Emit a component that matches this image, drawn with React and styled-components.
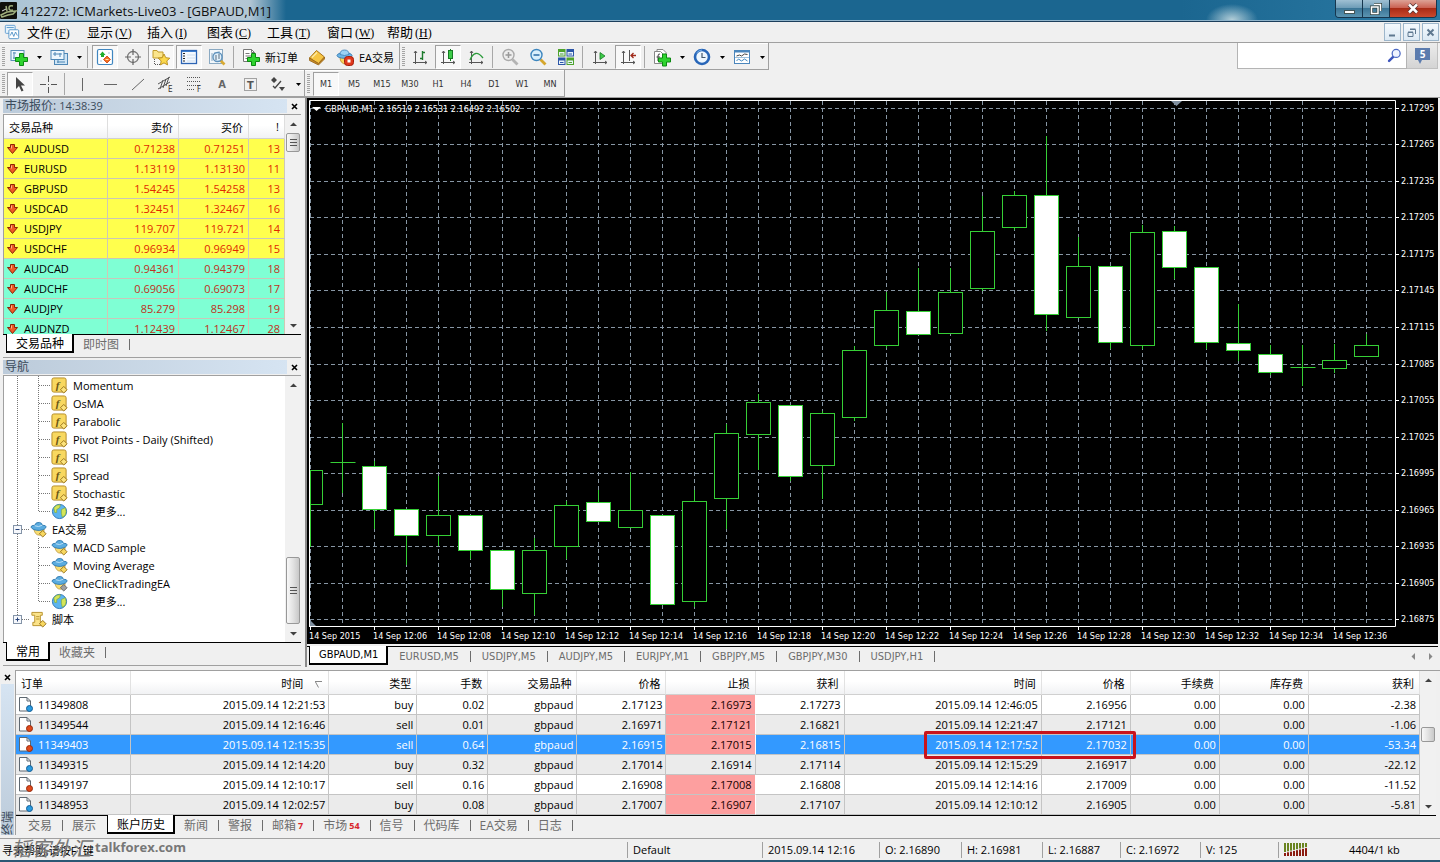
import React, { useState } from 'react';
import styled, { createGlobalStyle, css } from 'styled-components';

const GlobalStyle = createGlobalStyle`
  :root {
    --face: #f0f0f0;
    --line: #a0a0a0;
    --font-ui: "Open Sans", "Noto Sans CJK SC", sans-serif;
    --font-small: "DejaVu Sans Condensed", "DejaVu Sans", "Noto Sans CJK SC", sans-serif;
  }

  * {
    box-sizing: border-box;
  }

  body {
    margin: 0;
    background: var(--face);
    color: #000;
    font-family: var(--font-ui);
    font-size: 11px;
  }

  button, input {
    font: inherit;
    color: inherit;
    margin: 0;
    padding: 0;
    border: 0;
    background: none;
  }

  svg {
    display: block;
    flex: none;
    overflow: visible;
  }
`;

const Window = styled.div`
  display: flex;
  flex-direction: column;
  border-bottom: 2px solid #2b5874;
`;

/* title bar */

const TitleBar = styled.header`
  display: flex;
  align-items: center;
  height: 22px;
  padding-right: 3px;
  border-bottom: 1px solid #1c3f5c;
  box-shadow: inset 0 -1px 0 #8fb4cb;
  background:
    radial-gradient(ellipse 26px 16px at 1232px 20px, #b4cfd9, transparent),
    linear-gradient(90deg, #a9c3d4 0, #c2d0dc 140px, #b2c6d4 250px, #1b6690 286px, #1b6690 82%, #2b7aa4);
`;

const TitleText = styled.h1`
  flex: 1;
  margin: 0 0 0 4px;
  font-size: 13px;
  line-height: 20px;
  font-weight: 400;
  color: #111;
`;

const CaptionGroup = styled.div`
  display: flex;
  align-self: flex-start;
  height: 18px;
  border: 1px solid #16364e;
  border-top: 0;
  border-radius: 0 0 4px 4px;
  overflow: hidden;
`;

const CaptionButton = styled.button`
  display: flex;
  align-items: center;
  justify-content: center;
  width: ${(p) => (p.$close ? 46 : 27)}px;
  border-right: ${(p) => (p.$close ? '0' : '1px solid #16364e')};
  background: ${(p) =>
    p.$close
      ? 'linear-gradient(#dda296, #cb6253 45%, #a92b16 50%, #c9492e)'
      : 'linear-gradient(#9fc0d3, #6f9db8 45%, #3c7697 50%, #5b94b1)'};
`;

/* menu */

const MenuBar = styled.nav`
  display: flex;
  align-items: center;
  height: 21px;
  padding: 0 1px 0 4px;
  border-bottom: 1px solid var(--line);
`;

const MenuItems = styled.div`
  display: flex;
  flex: 1;
  margin-left: 7px;
`;

const MenuButton = styled.button`
  width: 60px;
  text-align: left;
  font-size: 13px;
  line-height: 18px;
  white-space: nowrap;

  span {
    margin-left: 2px;
    font-family: "Liberation Serif", serif;
    font-size: 12px;
  }
`;

const ChildButtons = styled.div`
  display: flex;
  gap: 2px;
`;

const ChildButton = styled.button`
  display: flex;
  align-items: center;
  justify-content: center;
  width: 17px;
  height: 18px;
  border: 1px solid #9db6cb;
  background: linear-gradient(#f4f9fd, #dce9f4);
`;

/* toolbars */

const ToolRow = styled.div`
  display: flex;
  align-items: stretch;
  height: 27px;
`;

const ToolBar = styled.div`
  display: flex;
  align-items: center;
  padding-top: 2px;
  padding-left: 2px;
  border-right: 1px solid var(--line);
  border-bottom: 1px solid var(--line);
  box-shadow: inset 0 1px 0 #fff;
`;

const Grip = styled.div`
  width: 3px;
  height: 20px;
  margin-right: ${(p) => p.$gap || 0}px;
  background: repeating-linear-gradient(#a4a4a4 0 1px, #f0f0f0 1px 2px);
`;

const Tool = styled.button`
  display: flex;
  align-items: center;
  justify-content: center;
  width: 26px;
  height: 24px;
  margin: 0 1px;
  border: 1px solid transparent;
  font-family: var(--font-small);
  font-size: 9px;
  color: #333;
  ${(p) =>
    p.$on &&
    css`
      border-color: #a0a0a0 #fff #fff #a0a0a0;
      background: #f8f8f8;
    `}
`;

const TextTool = styled.button`
  display: flex;
  align-items: center;
  gap: 5px;
  height: 24px;
  padding: 0 5px;
  white-space: nowrap;
`;

const CaretButton = styled.button`
  display: flex;
  align-items: center;
  justify-content: center;
  width: 12px;
  height: 24px;
`;

const Divider = styled.div`
  width: 1px;
  height: 22px;
  margin: 0 3px 0 2px;
  background: #a8a8a8;
`;

const SearchBox = styled.label`
  display: flex;
  align-items: center;
  width: 170px;
  height: 26px;
  margin-left: auto;
  padding-right: 4px;
  border: 1px solid #b4b4b4;
  border-top: 0;
  background: #fff;

  input {
    flex: 1;
    min-width: 0;
    height: 22px;
    padding: 0 4px;
    outline: 0;
  }
`;

const ChatButton = styled.button`
  display: flex;
  align-items: center;
  justify-content: center;
  width: 31px;
  height: 26px;
  margin-right: 2px;
  border-right: 1px solid #c0c0c0;
  border-bottom: 1px solid #c0c0c0;
  background: linear-gradient(#ececec, #d4d4d4);
`;

/* work area */

const WorkArea = styled.main`
  display: flex;
`;

const SideColumn = styled.aside`
  display: flex;
  flex-direction: column;
  width: 307px;
  flex: none;
  padding: 0 4px 0 3px;
  border-top: 1px solid var(--line);
  border-right: 2px solid #8c8c8c;
`;

const Panel = styled.section`
  display: flex;
  flex-direction: column;
  padding-bottom: 3px;
  margin-bottom: 1px;
  border-bottom: 1px solid var(--line);
`;

const PanelTitle = styled.div`
  display: flex;
  align-items: center;
  height: 14px;
  margin: 1px 0;

  h2 {
    flex: 1;
    margin: 0;
    padding-left: 2px;
    font-size: 12px;
    line-height: 14px;
    font-weight: 400;
    color: #3b4b5b;
    background: linear-gradient(90deg, #bccbda, #d6e4f2);
  }

  span {
    font-size: 11px;
  }
`;

const CloseButton = styled.button`
  display: flex;
  align-items: center;
  justify-content: center;
  width: 14px;
  height: 14px;
`;

const PanelBody = styled.div`
  display: flex;
  height: ${(p) => p.$height}px;
  overflow: hidden;
  border-top: 1px solid var(--line);
  border-left: 1px solid var(--line);
  background: #fff;
`;

const ScrollTrack = styled.div`
  display: flex;
  flex-direction: column;
  align-items: center;
  width: 16px;
  flex: none;
  background: #f1f1f1;
`;

const ScrollArrow = styled.button`
  display: flex;
  align-items: center;
  justify-content: center;
  width: 16px;
  height: 18px;
  flex: none;
`;

const ScrollSpace = styled.div`
  flex: ${(p) => p.$grow} 0 0;
`;

const ScrollThumb = styled.div`
  display: flex;
  align-items: center;
  justify-content: center;
  width: 14px;
  height: ${(p) => p.$size}px;
  flex: none;
  border: 1px solid #989898;
  border-radius: 2px;
  background: linear-gradient(90deg, #f8f8f8, #e2e2e2 50%, #c8c8c8);
`;

const Tab = styled.button`
  display: flex;
  align-items: center;
  height: 18px;
  padding-left: 9px;
  color: #6d6d6d;
  white-space: nowrap;

  &::after {
    content: '';
    width: 1px;
    height: 11px;
    margin-left: 10px;
    background: ${(p) => (p.$bare ? 'transparent' : '#6d6d6d')};
  }

  sub {
    margin-left: 2px;
    font-family: "Open Sans", sans-serif;
    font-size: 9px;
    font-weight: 700;
    color: #d8262c;
  }

  ${(p) =>
    p.$active &&
    css`
      height: 19px;
      margin-top: -1px;
      padding: 0 8px 0 9px;
      color: #000;
      background: #fff;
      border: solid #000;
      border-width: 0 2px 2px 1px;

      &::after {
        display: none;
      }
    `}
`;

const TabStrip = styled.div`
  display: flex;
  align-items: flex-start;
  height: 20px;
  padding-left: ${(p) => (p.$latin ? 2 : 3)}px;
  border-top: 1px solid #000;
  font-family: ${(p) => (p.$latin ? 'var(--font-small)' : 'inherit')};
  font-size: ${(p) => (p.$latin ? 11 : 12)}px;

  ${(p) =>
    p.$latin &&
    css`
      ${Tab} + ${Tab} {
        padding-left: 11px;
      }

      ${Tab}::after {
        margin-left: 11px;
      }
    `}
`;

/* tables */

const QuoteTable = styled.table`
  flex: 1;
  align-self: flex-start;
  table-layout: fixed;
  border-collapse: separate;
  border-spacing: 0;

  th {
    height: 24px;
    padding: 0 5px;
    font-weight: 400;
    text-align: right;
    border-right: 1px solid #dedede;
    border-bottom: 1px solid #d0d0d0;
    background: linear-gradient(#fff 45%, #f1f2f4);
  }

  th:first-child {
    text-align: left;
  }
`;

const QuoteRow = styled.tr`
  background: ${(p) => (p.$tone === 'major' ? '#ffff4d' : '#7fffd4')};

  td {
    height: 20px;
    padding: 0 3px;
    text-align: right;
    line-height: 16px;
    color: ${(p) => (p.$tone === 'major' ? '#e02800' : '#c03020')};
    border-right: 1px solid #cfc9b4;
    border-bottom: 1px solid #c9c7b8;
  }

  td:first-child {
    color: #000;
  }

  td:last-child {
    padding-right: 4px;
  }
`;

const CellLabel = styled.div`
  display: flex;
  align-items: center;
  gap: ${(p) => p.$gap || 4}px;
`;

const Tree = styled.ul`
  flex: 1;
  margin: 0;
  padding: 0 0 0 5px;
  list-style: none;
`;

const TreeItem = styled.li`
  display: flex;
  align-items: center;
  height: 18px;
  white-space: nowrap;

  span {
    margin-left: 5px;
  }
`;

/* chart */

const ChartColumn = styled.div`
  flex: 1;
  min-width: 0;
  padding-right: 2px;
  border-top: 1px solid var(--line);
`;

const ChartSvg = styled.svg`
  width: 100%;
  height: auto;
  background: #000;
  font-family: var(--font-small);
  font-size: 9px;
  margin-bottom: 2px;
`;

const TabArrows = styled.div`
  display: flex;
  gap: 10px;
  margin: 6px 4px 0 auto;
`;

/* terminal */

const Terminal = styled.section`
  display: flex;
  margin-top: 3px;
  padding-bottom: 3px;
  border-bottom: 1px solid var(--line);
`;

const TerminalSide = styled.div`
  display: flex;
  flex-direction: column;
  align-items: center;
  width: 15px;
  flex: none;

  h2 {
    flex: 1;
    width: 13px;
    margin: 0;
    font-size: 12px;
    line-height: 13px;
    font-weight: 400;
    color: #3b4b5b;
    writing-mode: vertical-rl;
    text-orientation: sideways;
    transform: rotate(180deg);
    background: linear-gradient(#bccbda, #d6e4f2);
  }
`;

const TerminalMain = styled.div`
  flex: 1;
  min-width: 0;
  padding-right: 4px;
  border-top: 1px solid var(--line);
  border-left: 1px solid var(--line);
`;

const TerminalBody = styled.div`
  display: flex;
  background: #fff;
`;

const OrderTable = styled.table`
  flex: 1;
  min-width: 0;
  table-layout: fixed;
  border-collapse: separate;
  border-spacing: 0;

  th {
    height: 24px;
    padding: 0 5px;
    font-weight: 400;
    text-align: right;
    white-space: nowrap;
    border-right: 1px solid #e2e2e2;
    border-bottom: 1px solid #d0d0d0;
    background: linear-gradient(#fff 45%, #f1f2f4);
  }

  th:first-child {
    text-align: left;
  }

  th svg {
    display: inline-block;
    margin: 0 1px 0 12px;
  }
`;

const OrderRow = styled.tr`
  background: ${(p) => (p.$selected ? '#3399ff' : p.$odd ? '#ebebeb' : '#fff')};
  color: ${(p) => (p.$selected ? '#fff' : '#000')};
`;

const OrderCell = styled.td`
  position: relative;
  height: 20px;
  padding: 0 3px;
  text-align: right;
  line-height: 16px;
  white-space: nowrap;
  border-right: 1px solid #c4c4c4;
  border-bottom: 1px solid #c4c4c4;
  ${(p) =>
    p.$stop &&
    css`
      color: #200000;
      background: #fd9f9f;
      border-right-color: #fff;
    `}
`;

const Marker = styled.div`
  position: absolute;
  z-index: 1;
  top: -4px;
  right: -95px;
  width: 212px;
  height: 28px;
  border: 3px solid #c9141c;
  border-radius: 2px;
  pointer-events: none;
`;

/* status bar */

const StatusBar = styled.footer`
  position: relative;
  display: flex;
  align-items: center;
  height: 21px;
`;

const StatusHelp = styled.div`
  flex: 1;
  padding-left: 2px;
`;

const StatusCell = styled.div`
  display: flex;
  align-items: center;
  width: ${(p) => p.$width}px;
  height: 16px;
  padding-left: 5px;
  border-left: 1px solid #a0a0a0;
  white-space: nowrap;

  svg {
    margin-right: 41px;
  }
`;

const Watermark = styled.div`
  position: absolute;
  left: 11px;
  top: -2px;
  display: flex;
  align-items: center;
  gap: 4px;
  height: 20px;
  font-family: "Open Sans", sans-serif;
  font-size: 13px;
  font-weight: 700;
  color: #777;

  i {
    font-family: "Noto Sans CJK SC", sans-serif;
    font-size: 20px;
    font-weight: 400;
  }
`;

/* icons */

const Caret = () => (
  <svg width="5" height="3" viewBox="0 0 5 3"><path d="M0 0h5L2.5 3z" fill="#000" /></svg>
);

const CloseMark = () => (
  <svg width="7" height="7" viewBox="0 0 7 7"><path d="M1 1l5 5M6 1L1 6" stroke="#000" strokeWidth="1.6" /></svg>
);

const Arrow = ({ d, fill = '#404040' }) => (
  <svg width="7" height="7" viewBox="0 0 7 7"><path d={d} fill={fill} /></svg>
);
const UP = 'M0 5L3.5 1.5 7 5z';
const DOWN = 'M0 2L3.5 5.5 7 2z';
const LEFT = 'M5 0v7L1.5 3.5z';
const RIGHT = 'M2 0v7l3.5-3.5z';

const Icon = ({ size = 18, children }) => (
  <svg width={size} height={size} viewBox="0 0 18 18" fill="none">{children}</svg>
);

const Plus = ({ x = 6, y = 6 }) => (
  <path
    transform={`translate(${x} ${y})`}
    d="M4 .5h4v4h4v4H8v4H4v-4H0v-4h4z"
    fill="#2fd32f"
    stroke="#0c8a12"
  />
);

const Axes = () => <path d="M4.5 3v13M2 14.5h14M3 5l1.5-2L6 5M14 13l2 1.5-2 1.5" stroke="#555" />;

const AppLogo = () => (
  <svg width="17" height="17" viewBox="0 0 17 17">
    <rect width="17" height="17" rx="1" fill="#10100c" />
    <path d="M1 13l6-3 9-1-3 3-5 1-6 2zM6 4l1 5M13 4q-4-1-4 2t4 2" stroke="#9fae7c" strokeWidth="1.5" fill="none" />
    <path d="M2 9l4-2" stroke="#ddd" />
  </svg>
);

const ChildLogo = () => (
  <Icon size={16}>
    <rect x="1.5" y="1.5" width="11" height="9" rx="1" fill="#e8f4fc" stroke="#5b9bd0" />
    <rect x="5.5" y="6.5" width="11" height="10" rx="1" fill="#fff" stroke="#4d8fc6" />
    <path d="M3 4h8M7 13l2-4 2 5 2-5 2 4" stroke="#4d8fc6" />
  </Icon>
);

const NewChartIcon = () => (
  <Icon>
    <rect x="1" y="2.5" width="13" height="10" fill="#eef7fd" stroke="#5d8fb8" />
    <path d="M4 4v7M3 5h3M3 10h9" stroke="#5d8fb8" />
    <Plus x={5.5} y={5} />
  </Icon>
);

const ProfilesIcon = () => (
  <Icon>
    <rect x="4.5" y="5.5" width="13" height="11" fill="#cfe5f5" stroke="#4f87b5" />
    <rect x="1" y="2.5" width="13" height="9" fill="#eef7fd" stroke="#4f87b5" />
    <path d="M3 6h9M5 4v4M10 5v4M7 14h8M8 12v3" stroke="#4f87b5" />
  </Icon>
);

const MarketWatchIcon = () => (
  <Icon>
    <rect x="1.5" y="1.5" width="15" height="15" rx="1.5" fill="#fff" stroke="#3f86c0" strokeWidth="1.2" />
    <path d="M3.5 7L6.5 3.5 9.500 7H8v2H5V7z" fill="#1fae2b" />
    <path d="M7.5 11.500L11 8l3.500 3.500L11 15z" fill="#f4711f" stroke="#c63c11" strokeWidth=".8" />
    <path d="M9.500 11.500h3" stroke="#ffe0b0" />
    <path d="M4 13h2M12 5h2" stroke="#a8c8e0" />
  </Icon>
);

const TargetIcon = () => (
  <Icon>
    <circle cx="9" cy="9" r="5.5" stroke="#777" strokeWidth="1.3" />
    <path d="M9 1v6M9 11v6M1 9h6M11 9h6" stroke="#666" strokeWidth="1.2" />
  </Icon>
);

const star = 'M12 6l1.8 3.7 4 .5-3 2.7.8 4-3.6-2-3.6 2 .8-4-3-2.7 4-.5z';
const NavigatorIcon = () => (
  <Icon>
    <path d="M1 2.5h4l1 1.5h5v6H1z" fill="#fbe58c" stroke="#c09a2c" />
    <path d="M2.5 11v5.5H8" stroke="#555" strokeDasharray="1 1" />
    <path d={star} fill="#fbd84c" stroke="#b58a1a" strokeWidth=".9" />
  </Icon>
);

const TerminalIcon = () => (
  <Icon>
    <rect x="1.5" y="2.5" width="15" height="13" fill="#f4f9ff" stroke="#2c64b4" strokeWidth="1.3" />
    <path d="M2 3.5h14" stroke="#3d7fd0" />
    <path d="M4 5v10" stroke="#222" strokeWidth="2" strokeDasharray="1 1.5" />
    <path d="M7 7h8M7 10h8M7 13h8" stroke="#cfdff0" />
  </Icon>
);

const TesterIcon = () => (
  <Icon>
    <rect x="1.5" y="1.5" width="13" height="14" fill="#f2f7fb" stroke="#8aa9c2" />
    <path d="M4 13V5m3 8V4m4 4V3" stroke="#8aa9c2" />
    <path d="M12.5 12.5l4 4" stroke="#d8aa34" strokeWidth="2.6" />
    <circle cx="9.5" cy="9" r="4.5" fill="#dff0fb" fillOpacity=".85" stroke="#5d90bb" strokeWidth="1.3" />
    <path d="M8 7v5M11 6v5" stroke="#5d6f80" />
  </Icon>
);

const NewOrderIcon = () => (
  <Icon>
    <path d="M1.5 1.5h8l3 3v9h-11z" fill="#fff" stroke="#777" />
    <path d="M9.5 1.5v3h3M3.5 5.5h4M3.5 8h6M3.5 10.5h3" stroke="#777" />
    <Plus x={5.5} y={5} />
  </Icon>
);

const GoldIcon = () => (
  <Icon>
    <path d="M1.5 10L8.5 2.5l8 6.5-6 6.5z" fill="#f6c544" stroke="#a9741a" />
    <path d="M1.5 10v2.5l9 4.5 6-6V9l-6 6.5z" fill="#c98a1f" stroke="#94631a" strokeWidth=".8" />
    <path d="M4 9.5l5-5" stroke="#fdeaa6" strokeWidth="1.5" />
  </Icon>
);

const ExpertIcon = () => (
  <Icon>
    <path d="M4 9q0 7 6 7t5-7z" fill="#f8d55c" stroke="#b98a22" strokeWidth=".8" />
    <ellipse cx="8.5" cy="7.5" rx="7.5" ry="2.8" fill="#6db6e6" stroke="#3c7fb6" />
    <path d="M4 6.5Q4 2 8.5 2T13 6.5q-4.5 2-9 0z" fill="#9bd2f4" stroke="#3c7fb6" strokeWidth=".8" />
    <rect x="8.5" y="8.5" width="9" height="9" rx="3" fill="#e0381c" stroke="#a41e0b" />
    <rect x="11.5" y="11.5" width="3" height="3" fill="#fff" />
  </Icon>
);

const BarsIcon = () => (
  <Icon><Axes /><path d="M11.5 3v9M9 10.5h2M12 4.5h2" stroke="#1c7a2c" strokeWidth="1.4" /></Icon>
);

const CandlesIcon = () => (
  <Icon><Axes /><path d="M11.5 1v12" stroke="#157a22" /><rect x="9.5" y="2.5" width="4" height="8" fill="#3ccb48" stroke="#157a22" /></Icon>
);

const LineIcon = () => (
  <Icon><Axes /><path d="M3 12q5-12 13-2" stroke="#2a9b3a" strokeWidth="1.3" /></Icon>
);

const ZoomIcon = ({ plus, on }) => (
  <Icon>
    <path d="M11.5 11.5l5 5" stroke={on ? '#d5a62c' : '#b4b4b4'} strokeWidth="2.8" />
    <circle cx="7.5" cy="7" r="5.5" fill={on ? '#d8effc' : '#ededed'} stroke={on ? '#3d86bf' : '#aaa'} strokeWidth="1.4" />
    <path d={plus ? 'M4.5 7h6M7.5 4v6' : 'M4.5 7h6'} stroke={on ? '#2a6ba6' : '#999'} strokeWidth="1.5" />
  </Icon>
);

const TileIcon = () => (
  <Icon>
    {[[1, 1, '#4fa32c'], [9.5, 1, '#2c56a8'], [1, 9.5, '#2c56a8'], [9.5, 9.5, '#4fa32c']].map(([x, y, c]) => (
      <g key={`${x}-${y}`}>
        <rect x={x} y={y} width="7.5" height="7.5" fill={c} />
        <path d={`M${x + 1} ${y + 3}h5.5v3.5h-5.5z`} fill="#e8f3fb" />
        <path d={`M${x + 2} ${y + 5}h3.5`} stroke={c} />
      </g>
    ))}
  </Icon>
);

const ScrollIcon = () => (
  <Icon><Axes /><path d="M9 4.5l5 3.5-5 3.5z" fill="#3ccb48" stroke="#157a22" strokeWidth=".8" /></Icon>
);

const ShiftIcon = () => (
  <Icon><Axes /><path d="M10.5 2v11" stroke="#555" /><path d="M17 7.5h-5M14.5 5L12 7.500l2.500 2.500" stroke="#a02a1a" strokeWidth="1.3" /></Icon>
);

const IndicatorsIcon = () => (
  <Icon>
    <path d="M4 1.500h6l3 3v9H4z" fill="#fff" stroke="#888" />
    <path d="M1.500 3.500h6l3 3v9h-9z" fill="#fff" stroke="#888" />
    <path d="M7 6q-2-.5-2 2v5M3.500 9H7" stroke="#444" />
    <Plus x={5.5} y={5.5} />
  </Icon>
);

const ClockIcon = () => (
  <Icon>
    <circle cx="9" cy="9" r="7" fill="#eef7fe" stroke="#2866b8" strokeWidth="2.6" />
    <path d="M9 5v4.5h3.5" stroke="#44586c" strokeWidth="1.2" />
    <path d="M3.5 5Q6 2 9 2" stroke="#79b3ea" />
  </Icon>
);

const TemplateIcon = () => (
  <Icon>
    <rect x="1.5" y="2.5" width="15" height="13" fill="#fff" stroke="#4b86bc" />
    <path d="M2 3.5h14" stroke="#4b86bc" strokeWidth="2" />
    <path d="M3.5 8l3-1 2 1 3-2 3 .5" stroke="#444" />
    <path d="M3.5 13l2-2 3 2 3-2 3 2" stroke="#3d86bf" />
    <path d="M2 9.5h14" stroke="#9fc2dd" />
  </Icon>
);

const SearchIcon = () => (
  <Icon size={15}>
    <path d="M8 10l-5.5 5.5" stroke="#3d55bd" strokeWidth="3" strokeLinecap="round" />
    <circle cx="11" cy="6.5" r="4.8" fill="#eef3ff" stroke="#4d6ac4" strokeWidth="1.5" />
  </Icon>
);

const ChatIcon = () => (
  <svg width="17" height="16" viewBox="0 0 17 16">
    <path d="M1 0h15v12H8l-2 4-2-4H1z" fill="#5c7cae" />
    <text x="8.5" y="10" textAnchor="middle" fontSize="10" fontWeight="700" fill="#fff">5</text>
  </svg>
);

const CursorIcon = () => (
  <Icon><path d="M5 2v12l3-3 2.5 5.5 2-1L10 10.5h4z" fill="#444" /></Icon>
);
const CrossIcon = () => (
  <Icon><path d="M9.5 1v6M9.5 12v6M1 9.5h6M12 9.5h6M9 9.5h1" stroke="#555" /></Icon>
);
const LineTool = ({ d }) => <Icon><path d={d} stroke="#666" /></Icon>;

const ChannelIcon = () => (
  <Icon>
    <path d="M1 9L13 2M1 14L13 7M3 14l3-9M6 13l3-9M9 11l3-9" stroke="#555" />
    <text x="11" y="17" fontSize="8" fill="#333">E</text>
  </Icon>
);
const FiboIcon = () => (
  <Icon>
    <path d="M2 2.5h14M2 6.5h14M2 10.5h14M2 14.5h8" stroke="#555" strokeDasharray="1 1" />
    <text x="12" y="17" fontSize="8" fill="#333">F</text>
  </Icon>
);
const TextIcon = () => (
  <Icon><text x="9" y="13" textAnchor="middle" fontSize="11" fontWeight="700" fill="#666">A</text></Icon>
);
const LabelIcon = () => (
  <Icon>
    <rect x="3.5" y="3.5" width="12" height="12" stroke="#555" strokeDasharray="1 1" />
    <text x="9.5" y="14" textAnchor="middle" fontSize="11" fontWeight="700" fill="#555">T</text>
  </Icon>
);
const ShapesIcon = () => (
  <Icon>
    <path d="M5 2l3 3-3 3-3-3zM10 12h6l-3 4z" fill="#444" />
    <path d="M4 11l2 2 6-7" stroke="#444" strokeWidth="1.3" />
  </Icon>
);

const DownArrowIcon = () => (
  <svg width="11" height="10" viewBox="0 0 11 10">
    <path d="M3.5.5h4v3h3L5.500 9.500l-5-6h3z" fill="#ee5a24" stroke="#8c2408" />
    <path d="M4.5 1.5v3" stroke="#ffb48a" />
  </svg>
);

const FunctionIcon = () => (
  <Icon size={17}>
    <rect x="1" y="1" width="15" height="15" rx="2" fill="#f8d860" stroke="#b28a26" />
    <text x="5" y="13" fontFamily="Liberation Serif, serif" fontStyle="italic" fontWeight="700" fontSize="12" fill="#6b5615">f</text>
    <path d="M13.5 10l3.5 3.5-3.5 3.5-3.5-3.5z" fill="#fce37c" stroke="#97721a" />
  </Icon>
);

const GlobeIcon = () => (
  <Icon size={17}>
    <circle cx="9" cy="9" r="7.5" fill="#5db4ee" stroke="#2c76b8" />
    <path d="M3 5q3-4 7-3l-1 3-3 2v3L4 10zM11 7l4-2q2 4 0 8l-3 2-1-4z" fill="#d5e55a" stroke="#7ba52d" strokeWidth=".6" />
  </Icon>
);

const HatIcon = ({ gray }) => (
  <Icon size={17}>
    <path d="M4 8q1 7 6 7t5-7z" fill="#f8dc72" stroke="#b8922c" strokeWidth=".8" />
    <path d="M1 6.5q0-2 4-2Q6 1 10 1.5q3 .5 3 3 4 0 4 1.5 0 3-7 4Q3 10 1 6.5z" fill="#5aace0" stroke="#2d76ab" strokeWidth=".9" />
    <path d="M5 5q4 2 8-.5" stroke="#bfe2f8" />
    <path d="M13.5 10l3.5 3.5-3.5 3.5-3.5-3.5z" fill={gray ? '#a0a0a0' : '#f8d860'} stroke={gray ? '#666' : '#97721a'} />
  </Icon>
);

const ScriptIcon = () => (
  <Icon size={17}>
    <path d="M2 1.5h11v3h-2V12h3v3.5H3V12h2V4.500H2z" fill="#fbe38a" stroke="#b8922c" />
    <path d="M6.5 6H10M6.5 8.5H10" stroke="#b8922c" />
    <path d="M13.5 10l3.5 3.5-3.5 3.5-3.5-3.5z" fill="#f8d860" stroke="#97721a" />
  </Icon>
);

const OrderIcon = ({ type }) => (
  <svg width="14" height="15" viewBox="0 0 14 15">
    <path d="M.5.5H8L11.500 4v10H.5z" fill="#fff" stroke="#5d6770" />
    <path d="M8 .5V4h3.5" fill="none" stroke="#5d6770" />
    <circle cx="10.5" cy="11.5" r="3" fill={type === 'buy' ? '#2a9be0' : '#e04a1c'} stroke={type === 'buy' ? '#135f98' : '#982a0a'} />
  </svg>
);

const LoadIcon = () => (
  <svg width="24" height="13" viewBox="0 0 24 13">
    {[0, 1, 2, 3, 4, 5, 6, 7].map((i) => (
      <g key={i}>
        <rect x={i * 3} y="0" width="2" height={9 - i * 0.7} fill="#6a8420" />
        <rect x={i * 3} y={10 - i * 0.7} width="2" height={3 + i * 0.7} fill="#8c1c10" />
      </g>
    ))}
  </svg>
);

// trunk lines of the tree: one 21px cell per level
const TreeLine = ({ level, last, toggle }) => (
  <svg width={level === 2 ? 42 : 21} height="18" viewBox={`0 0 ${level === 2 ? 42 : 21} 18`} fill="none">
    <g stroke="#777" strokeDasharray="1 1">
      {(level === 1 || !last) && <path d={toggle === '+' ? 'M8.5 0v9' : 'M8.5 0v18'} />}
      {level === 2 && last && <path d="M8.5 0v18" />}
      {level === 2 && <path d={last ? 'M29.5 0v9.5H41' : 'M29.5 0v18M30 9.5h11'} />}
      {level === 1 && <path d="M9 9.5h12" />}
    </g>
    {toggle && (
      <g>
        <rect x="4.5" y="5.5" width="8" height="8" fill="#f6f8fc" stroke="#8494a8" />
        <path d={toggle === '+' ? 'M6.5 9.5h4M8.5 7.5v4' : 'M6.5 9.5h4'} stroke="#26427a" />
      </g>
    )}
  </svg>
);

/* data */

const menus = [['文件', 'F'], ['显示', 'V'], ['插入', 'I'], ['图表', 'C'], ['工具', 'T'], ['窗口', 'W'], ['帮助', 'H']];
const periods = ['M1', 'M5', 'M15', 'M30', 'H1', 'H4', 'D1', 'W1', 'MN'];

const quotes = [
  ['AUDUSD', '0.71238', '0.71251', 13, 'major'],
  ['EURUSD', '1.13119', '1.13130', 11, 'major'],
  ['GBPUSD', '1.54245', '1.54258', 13, 'major'],
  ['USDCAD', '1.32451', '1.32467', 16, 'major'],
  ['USDJPY', '119.707', '119.721', 14, 'major'],
  ['USDCHF', '0.96934', '0.96949', 15, 'major'],
  ['AUDCAD', '0.94361', '0.94379', 18, 'cross'],
  ['AUDCHF', '0.69056', '0.69073', 17, 'cross'],
  ['AUDJPY', '85.279', '85.298', 19, 'cross'],
  ['AUDNZD', '1.12439', '1.12467', 28, 'cross'],
];

const treeRows = [
  { label: 'Momentum', icon: <FunctionIcon /> },
  { label: 'OsMA', icon: <FunctionIcon /> },
  { label: 'Parabolic', icon: <FunctionIcon /> },
  { label: 'Pivot Points - Daily (Shifted)', icon: <FunctionIcon /> },
  { label: 'RSI', icon: <FunctionIcon /> },
  { label: 'Spread', icon: <FunctionIcon /> },
  { label: 'Stochastic', icon: <FunctionIcon /> },
  { label: '842 更多...', icon: <GlobeIcon />, last: true },
  { label: 'EA交易', icon: <HatIcon />, level: 1, toggle: '-' },
  { label: 'MACD Sample', icon: <HatIcon /> },
  { label: 'Moving Average', icon: <HatIcon /> },
  { label: 'OneClickTradingEA', icon: <HatIcon gray /> },
  { label: '238 更多...', icon: <GlobeIcon />, last: true },
  { label: '脚本', icon: <ScriptIcon />, level: 1, toggle: '+' },
];

const chartTabs = ['GBPAUD,M1', 'EURUSD,M5', 'USDJPY,M5', 'AUDJPY,M5', 'EURJPY,M1', 'GBPJPY,M5', 'GBPJPY,M30', 'USDJPY,H1'];

const prices = [
  ['2.17295', 108], ['2.17265', 144], ['2.17235', 181], ['2.17205', 217], ['2.17175', 254],
  ['2.17145', 290], ['2.17115', 327], ['2.17085', 364], ['2.17055', 400], ['2.17025', 437],
  ['2.16995', 473], ['2.16965', 510], ['2.16935', 546], ['2.16905', 583], ['2.16875', 619],
];

const times = ['2015', '12:06', '12:08', '12:10', '12:12', '12:14', '12:16', '12:18', '12:20',
  '12:22', '12:24', '12:26', '12:28', '12:30', '12:32', '12:34', '12:36'];

// high, top of body, bottom of body, low, filled
const candles = [
  [470, 470, 504, 546, 0],
  [423, 462, 462, 492, 0],
  [461, 466, 509, 528, 1],
  [509, 509, 535, 564, 1],
  [476, 515, 535, 545, 0],
  [515, 515, 550, 558, 1],
  [550, 550, 589, 606, 1],
  [538, 550, 593, 614, 0],
  [501, 505, 546, 558, 0],
  [490, 502, 521, 521, 1],
  [472, 510, 527, 527, 0],
  [515, 515, 604, 604, 1],
  [490, 501, 601, 606, 0],
  [424, 433, 498, 528, 0],
  [394, 402, 434, 469, 0],
  [405, 405, 476, 480, 1],
  [411, 413, 465, 498, 0],
  [346, 350, 417, 420, 0],
  [292, 310, 345, 347, 0],
  [268, 311, 334, 334, 1],
  [268, 292, 333, 333, 0],
  [196, 231, 288, 290, 0],
  [191, 195, 227, 229, 0],
  [136, 195, 314, 330, 1],
  [237, 266, 317, 317, 0],
  [266, 266, 342, 348, 1],
  [225, 232, 345, 348, 0],
  [226, 231, 267, 278, 1],
  [267, 267, 342, 348, 1],
  [304, 343, 350, 360, 1],
  [345, 354, 372, 374, 1],
  [345, 367, 367, 385, 0],
  [344, 360, 368, 372, 0],
  [334, 345, 356, 356, 0],
];

const orderColumns = [
  ['订单', 115], ['时间', 198], ['类型', 88], ['手数', 71], ['交易品种', 89], ['价格', 89], ['止损', 89],
  ['获利', 89], ['时间', 197], ['价格', 89], ['手续费', 89], ['库存费', 89], ['获利', 111],
];

const orders = [
  ['11349808', '2015.09.14 12:21:53', 'buy', '0.02', 'gbpaud', '2.17123', '2.16973', '2.17273', '2015.09.14 12:46:05', '2.16956', '0.00', '0.00', '-2.38'],
  ['11349544', '2015.09.14 12:16:46', 'sell', '0.01', 'gbpaud', '2.16971', '2.17121', '2.16821', '2015.09.14 12:21:47', '2.17121', '0.00', '0.00', '-1.06'],
  ['11349403', '2015.09.14 12:15:35', 'sell', '0.64', 'gbpaud', '2.16915', '2.17015', '2.16815', '2015.09.14 12:17:52', '2.17032', '0.00', '0.00', '-53.34'],
  ['11349315', '2015.09.14 12:14:20', 'buy', '0.32', 'gbpaud', '2.17014', '2.16914', '2.17114', '2015.09.14 12:15:29', '2.16917', '0.00', '0.00', '-22.12'],
  ['11349197', '2015.09.14 12:10:17', 'sell', '0.16', 'gbpaud', '2.16908', '2.17008', '2.16808', '2015.09.14 12:14:16', '2.17009', '0.00', '0.00', '-11.52'],
  ['11348953', '2015.09.14 12:02:57', 'buy', '0.08', 'gbpaud', '2.17007', '2.16907', '2.17107', '2015.09.14 12:10:12', '2.16905', '0.00', '0.00', '-5.81'],
];
const notStopped = '11349315';

const terminalTabs = [['交易'], ['展示'], ['账户历史'], ['新闻'], ['警报'], ['邮箱', '7'], ['市场', '54'], ['信号'], ['代码库'], ['EA交易'], ['日志']];

/* parts */

const DropTool = ({ label, children }) => (
  <>
    <Tool aria-label={label}>{children}</Tool>
    <CaretButton aria-label={`${label} menu`}><Caret /></CaretButton>
  </>
);

const Tabs = ({ items, active, onSelect, latin, children }) => (
  <TabStrip $latin={latin}>
    {items.map(([label, count], i) => (
      <Tab key={label} $active={i === active} $bare={i === active - 1} onClick={() => onSelect(i)}>
        {label}
        {count && <sub>{count}</sub>}
      </Tab>
    ))}
    {children}
  </TabStrip>
);

const ScrollBar = ({ size, before, after, plain }) => (
  <ScrollTrack>
    <ScrollArrow aria-label="Scroll up"><Arrow d={UP} /></ScrollArrow>
    <ScrollSpace $grow={before} />
    <ScrollThumb $size={size}>
      {!plain && (
        <svg width="7" height="8" viewBox="0 0 7 8"><path d="M0 .5h7M0 3.5h7M0 6.5h7" stroke="#555" /></svg>
      )}
    </ScrollThumb>
    <ScrollSpace $grow={after} />
    <ScrollArrow aria-label="Scroll down"><Arrow d={DOWN} /></ScrollArrow>
  </ScrollTrack>
);

const Chart = () => (
  <ChartSvg viewBox="307 98 1131 546" role="img" aria-label="GBPAUD,M1">
    <g stroke="#8796a4" strokeDasharray="4 3" fill="none">
      {prices.map(([label, y]) => <path key={label} d={`M310 ${y + 0.5}H1395`} />)}
      {candles.map((c, i) => <path key={i} d={`M${310.5 + i * 32} 101V626`} />)}
    </g>
    <g stroke="#36cf36">
      {candles.map(([high, top, bottom, low, filled], i) => {
        const x = 310.5 + i * 32;
        const left = i === 0 ? x : x - 12;
        return (
          <g key={i}>
            <path d={`M${x} ${high}V${low + 1}`} />
            {top === bottom
              ? <path d={`M${left} ${top + 0.5}h25`} />
              : <rect x={left} y={top + 0.5} width={x + 12 - left} height={bottom - top} fill={filled ? '#fff' : '#000'} />}
          </g>
        );
      })}
    </g>
    <path d="M309.5 626V100.500H1395.500V626.500H309" stroke="#fff" fill="none" />
    <path d="M1171 101h11l-5.5 5zM310 620v6h6z" fill="#8090a0" />
    <g fill="#fff">
      <path d="M312 107h9l-4.5 4z" />
      <text x="325" y="112" style={{ whiteSpace: 'pre' }}>GBPAUD,M1  2.16519 2.16531 2.16492 2.16502</text>
      {prices.map(([label, y]) => (
        <g key={label}>
          <rect x="1396" y={y} width="3" height="1" />
          <text x="1401" y={y + 3}>{label}</text>
        </g>
      ))}
      {times.map((t, i) => (
        <g key={t}>
          <rect x={310 + i * 64} y="627" width="1" height="3" />
          <text x={309 + i * 64} y="639">14 Sep {t}</text>
        </g>
      ))}
    </g>
  </ChartSvg>
);

const App = () => {
  const [quoteTab, setQuoteTab] = useState(0);
  const [navTab, setNavTab] = useState(0);
  const [chartTab, setChartTab] = useState(0);
  const [terminalTab, setTerminalTab] = useState(2);
  const [period, setPeriod] = useState('M1');
  const [selected, setSelected] = useState('11349403');

  return (
    <Window>
      <GlobalStyle />
      <TitleBar>
        <AppLogo />
        <TitleText>412272: ICMarkets-Live03 - [GBPAUD,M1]</TitleText>
        <CaptionGroup>
          <CaptionButton aria-label="Minimize">
            <svg width="11" height="12" viewBox="0 0 11 12"><rect x=".5" y="7.5" width="10" height="3" fill="#fff" stroke="#455" /></svg>
          </CaptionButton>
          <CaptionButton aria-label="Restore">
            <svg width="12" height="12" viewBox="0 0 12 12" fill="none">
              <path d="M4 1.5h6.5V8M1.5 4H8v6.500H1.500z" stroke="#344" strokeWidth="3" />
              <path d="M4 1.5h6.5V8M1.5 4H8v6.500H1.500z" stroke="#fff" strokeWidth="1.5" />
            </svg>
          </CaptionButton>
          <CaptionButton $close aria-label="Close">
            <svg width="12" height="11" viewBox="0 0 12 11">
              <path d="M2 1.5l8 8M10 1.5l-8 8" stroke="#533" strokeWidth="4" />
              <path d="M2 1.5l8 8M10 1.5l-8 8" stroke="#fff" strokeWidth="2.5" />
            </svg>
          </CaptionButton>
        </CaptionGroup>
      </TitleBar>

      <MenuBar>
        <ChildLogo />
        <MenuItems>
          {menus.map(([label, key]) => (
            <MenuButton key={key}>{label}<span>(<u>{key}</u>)</span></MenuButton>
          ))}
        </MenuItems>
        <ChildButtons>
          <ChildButton aria-label="Minimize chart">
            <svg width="9" height="9" viewBox="0 0 9 9"><path d="M1 7.5h6" stroke="#5f7890" strokeWidth="2" /></svg>
          </ChildButton>
          <ChildButton aria-label="Restore chart">
            <svg width="9" height="9" viewBox="0 0 9 9" fill="none" stroke="#5f7890"><path d="M3 1.5h5.5V6M1 4.5h5v4H1zM1 4h5M3 1h5.5" /></svg>
          </ChildButton>
          <ChildButton aria-label="Close chart">
            <svg width="9" height="9" viewBox="0 0 9 9"><path d="M1.5 1.5l6 6M7.5 1.5l-6 6" stroke="#5f7890" strokeWidth="2" /></svg>
          </ChildButton>
        </ChildButtons>
      </MenuBar>

      <ToolRow>
        <ToolBar>
          <Grip />
          <DropTool label="New chart"><NewChartIcon /></DropTool>
          <DropTool label="Profiles"><ProfilesIcon /></DropTool>
          <Divider />
          <Tool $on aria-label="Market watch"><MarketWatchIcon /></Tool>
          <Tool aria-label="Data window"><TargetIcon /></Tool>
          <Tool $on aria-label="Navigator"><NavigatorIcon /></Tool>
          <Tool $on aria-label="Terminal"><TerminalIcon /></Tool>
          <Tool aria-label="Strategy tester"><TesterIcon /></Tool>
          <Divider />
          <TextTool><NewOrderIcon />新订单</TextTool>
          <Tool aria-label="MetaEditor"><GoldIcon /></Tool>
          <TextTool><ExpertIcon />EA交易</TextTool>
        </ToolBar>
        <ToolBar>
          <Grip $gap={1} />
          <Tool aria-label="Bar chart"><BarsIcon /></Tool>
          <Tool $on aria-label="Candlesticks"><CandlesIcon /></Tool>
          <Tool aria-label="Line chart"><LineIcon /></Tool>
          <Divider />
          <Tool aria-label="Zoom in"><ZoomIcon plus /></Tool>
          <Tool aria-label="Zoom out"><ZoomIcon on /></Tool>
          <Tool aria-label="Tile windows"><TileIcon /></Tool>
          <Divider />
          <Tool aria-label="Auto scroll"><ScrollIcon /></Tool>
          <Tool $on aria-label="Chart shift"><ShiftIcon /></Tool>
          <Divider />
          <DropTool label="Indicators"><IndicatorsIcon /></DropTool>
          <DropTool label="Periods"><ClockIcon /></DropTool>
          <DropTool label="Templates"><TemplateIcon /></DropTool>
        </ToolBar>
        <SearchBox>
          <input type="text" aria-label="Search" />
          <SearchIcon />
        </SearchBox>
        <ChatButton aria-label="Messages"><ChatIcon /></ChatButton>
      </ToolRow>

      <ToolRow>
        <ToolBar>
          <Grip $gap={1} />
          <Tool $on aria-label="Cursor"><CursorIcon /></Tool>
          <Tool aria-label="Crosshair"><CrossIcon /></Tool>
          <Divider />
          <Tool aria-label="Vertical line"><LineTool d="M9.5 3v13" /></Tool>
          <Tool aria-label="Horizontal line"><LineTool d="M3 9.5h13" /></Tool>
          <Tool aria-label="Trend line"><LineTool d="M3 15L15 4" /></Tool>
          <Tool aria-label="Channel"><ChannelIcon /></Tool>
          <Tool aria-label="Fibonacci"><FiboIcon /></Tool>
          <Tool aria-label="Text"><TextIcon /></Tool>
          <Tool aria-label="Text label"><LabelIcon /></Tool>
          <DropTool label="Arrows"><ShapesIcon /></DropTool>
        </ToolBar>
        <ToolBar>
          <Grip $gap={2} />
          {periods.map((p) => (
            <Tool key={p} $on={p === period} onClick={() => setPeriod(p)}>{p}</Tool>
          ))}
        </ToolBar>
      </ToolRow>

      <WorkArea>
        <SideColumn>
          <Panel>
            <PanelTitle>
              <h2>市场报价: <span>14:38:39</span></h2>
              <CloseButton aria-label="Close market watch"><CloseMark /></CloseButton>
            </PanelTitle>
            <PanelBody $height={220}>
              <QuoteTable>
                <colgroup>
                  <col style={{ width: 104 }} />
                  <col style={{ width: 71 }} />
                  <col style={{ width: 70 }} />
                  <col />
                </colgroup>
                <thead>
                  <tr><th>交易品种</th><th>卖价</th><th>买价</th><th>!</th></tr>
                </thead>
                <tbody>
                  {quotes.map(([symbol, bid, ask, spread, tone]) => (
                    <QuoteRow key={symbol} $tone={tone}>
                      <td><CellLabel $gap={6}><DownArrowIcon />{symbol}</CellLabel></td>
                      <td>{bid}</td>
                      <td>{ask}</td>
                      <td>{spread}</td>
                    </QuoteRow>
                  ))}
                </tbody>
              </QuoteTable>
              <ScrollBar size={19} before={0} after={1} />
            </PanelBody>
            <Tabs items={[['交易品种'], ['即时图']]} active={quoteTab} onSelect={setQuoteTab} />
          </Panel>

          <Panel>
            <PanelTitle>
              <h2>导航</h2>
              <CloseButton aria-label="Close navigator"><CloseMark /></CloseButton>
            </PanelTitle>
            <PanelBody $height={267}>
              <Tree>
                {treeRows.map(({ label, icon, level = 2, last, toggle }) => (
                  <TreeItem key={label}>
                    <TreeLine level={level} last={last} toggle={toggle} />
                    {icon}
                    <span>{label}</span>
                  </TreeItem>
                ))}
              </Tree>
              <ScrollBar size={67} before={1} after={0} />
            </PanelBody>
            <Tabs items={[['常用'], ['收藏夹']]} active={navTab} onSelect={setNavTab} />
          </Panel>
        </SideColumn>

        <ChartColumn>
          <Chart />
          <Tabs items={chartTabs.map((t) => [t])} active={chartTab} onSelect={setChartTab} latin>
            <TabArrows>
              <button aria-label="Previous chart"><Arrow d={LEFT} fill="#888" /></button>
              <button aria-label="Next chart"><Arrow d={RIGHT} fill="#888" /></button>
            </TabArrows>
          </Tabs>
        </ChartColumn>
      </WorkArea>

      <Terminal>
        <TerminalSide>
          <CloseButton aria-label="Close terminal"><CloseMark /></CloseButton>
          <h2>终端</h2>
        </TerminalSide>
        <TerminalMain>
          <TerminalBody>
            <OrderTable>
              <colgroup>
                {orderColumns.map(([, width], i) => <col key={i} style={{ width }} />)}
              </colgroup>
              <thead>
                <tr>
                  {orderColumns.map(([label], i) => (
                    <th key={i}>
                      {label}
                      {i === 1 && (
                        <svg width="7" height="7" viewBox="0 0 7 7"><path d="M0 .5h7M.5 1l3 5.5" stroke="#888" fill="none" /></svg>
                      )}
                    </th>
                  ))}
                </tr>
              </thead>
              <tbody>
                {orders.map((order, row) => (
                  <OrderRow
                    key={order[0]}
                    $odd={row % 2 === 1}
                    $selected={order[0] === selected}
                    onClick={() => setSelected(order[0])}
                  >
                    {order.map((value, i) => (
                      <OrderCell key={i} $stop={i === 6 && order[0] !== notStopped}>
                        {i === 0 ? <CellLabel $gap={5}><OrderIcon type={order[2]} />{value}</CellLabel> : value}
                        {i === 8 && order[0] === '11349403' && <Marker />}
                      </OrderCell>
                    ))}
                  </OrderRow>
                ))}
              </tbody>
            </OrderTable>
            <ScrollBar size={15} before={40} after={57} plain />
          </TerminalBody>
          <Tabs items={terminalTabs} active={terminalTab} onSelect={setTerminalTab} />
        </TerminalMain>
      </Terminal>

      <StatusBar>
        <StatusHelp>寻求帮助,请按F1键</StatusHelp>
        <StatusCell $width={135}>Default</StatusCell>
        <StatusCell $width={117}>2015.09.14 12:16</StatusCell>
        <StatusCell $width={82}>O: 2.16890</StatusCell>
        <StatusCell $width={81}>H: 2.16981</StatusCell>
        <StatusCell $width={78}>L: 2.16887</StatusCell>
        <StatusCell $width={80}>C: 2.16972</StatusCell>
        <StatusCell $width={78}>V: 125</StatusCell>
        <StatusCell $width={162}><LoadIcon />4404/1 kb</StatusCell>
        <Watermark><i>韬客外汇</i>talkforex.com</Watermark>
      </StatusBar>
    </Window>
  );
};

export default App;
